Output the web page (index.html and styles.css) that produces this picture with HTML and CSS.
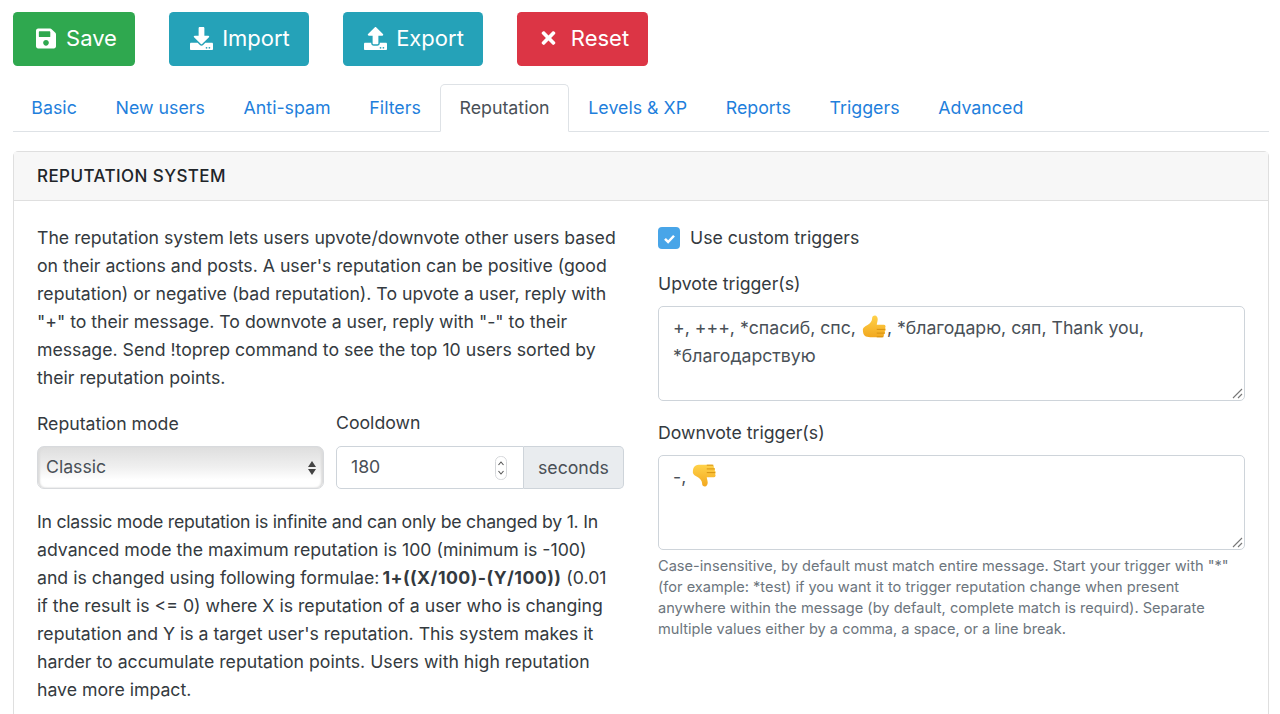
FILE: index.html
```html
<!DOCTYPE html>
<html lang="en">
<head>
<meta charset="utf-8">
<title>Reputation settings</title>
<link rel="stylesheet" href="styles.css">
</head>
<body>
<div class="page">
  <div class="toolbar">
    <button class="btn btn-green"><svg class="ic" viewBox="0 0 448 512"><path d="M433.941 129.941l-83.882-83.882A48 48 0 0 0 316.118 32H48C21.49 32 0 53.49 0 80v352c0 26.51 21.49 48 48 48h352c26.51 0 48-21.49 48-48V163.882a48 48 0 0 0-14.059-33.941zM224 416c-35.346 0-64-28.654-64-64 0-35.346 28.654-64 64-64s64 28.654 64 64c0 35.346-28.654 64-64 64zm96-304.52V212c0 6.627-5.373 12-12 12H76c-6.627 0-12-5.373-12-12V108c0-6.627 5.373-12 12-12h228.52c3.183 0 6.235 1.264 8.485 3.515l3.48 3.48A11.996 11.996 0 0 1 320 111.48z"/></svg><span class="btn-text">Save</span></button>
    <button class="btn btn-teal"><svg class="ic ic-wide" viewBox="0 0 512 512"><path d="M216 0h80c13.3 0 24 10.7 24 24v168h87.7c17.8 0 26.7 21.5 14.1 34.1L269.7 378.3c-7.5 7.5-19.8 7.5-27.3 0L90.1 226.1c-12.6-12.6-3.7-34.1 14.1-34.1H192V24c0-13.3 10.7-24 24-24zm296 376v112c0 13.3-10.7 24-24 24H24c-13.3 0-24-10.7-24-24V376c0-13.3 10.7-24 24-24h146.7l49 49c20.1 20.1 52.5 20.1 72.6 0l49-49H488c13.3 0 24 10.7 24 24zm-124 88c0-11-9-20-20-20s-20 9-20 20 9 20 20 20 20-9 20-20zm64 0c0-11-9-20-20-20s-20 9-20 20 9 20 20 20 20-9 20-20z"/></svg><span class="btn-text">Import</span></button>
    <button class="btn btn-teal"><svg class="ic ic-wide" viewBox="0 0 512 512"><path d="M296 384h-80c-13.3 0-24-10.7-24-24V192h-87.7c-17.8 0-26.7-21.5-14.1-34.1L242.3 5.7c7.5-7.5 19.8-7.5 27.3 0l152.2 152.2c12.6 12.6 3.7 34.1-14.1 34.1H320v168c0 13.3-10.7 24-24 24zm216-8v112c0 13.3-10.7 24-24 24H24c-13.3 0-24-10.7-24-24V376c0-13.3 10.7-24 24-24h136v8c0 30.9 25.1 56 56 56h80c30.9 0 56-25.1 56-56v-8h136c13.3 0 24 10.7 24 24zm-124 88c0-11-9-20-20-20s-20 9-20 20 9 20 20 20 20-9 20-20zm64 0c0-11-9-20-20-20s-20 9-20 20 9 20 20 20 20-9 20-20z"/></svg><span class="btn-text">Export</span></button>
    <button class="btn btn-red"><svg class="ic ic-x" viewBox="0 0 352 512"><path d="M242.72 256l100.07-100.07c12.28-12.28 12.28-32.19 0-44.48l-22.24-22.24c-12.28-12.28-32.19-12.28-44.48 0L176 189.28 75.93 89.21c-12.28-12.28-32.19-12.28-44.48 0L9.21 111.45c-12.28 12.28-12.28 32.19 0 44.48L109.28 256 9.21 356.07c-12.28 12.28-12.28 32.19 0 44.48l22.24 22.24c12.28 12.28 32.2 12.28 44.48 0L176 322.72l100.07 100.07c12.28 12.28 32.2 12.28 44.48 0l22.24-22.24c12.28-12.28 12.28-32.19 0-44.48L242.72 256z"/></svg><span class="btn-text">Reset</span></button>
  </div>
  <nav class="tabs">
    <a class="tab">Basic</a>
    <a class="tab">New users</a>
    <a class="tab">Anti-spam</a>
    <a class="tab">Filters</a>
    <a class="tab active">Reputation</a>
    <a class="tab">Levels &amp; XP</a>
    <a class="tab">Reports</a>
    <a class="tab">Triggers</a>
    <a class="tab">Advanced</a>
  </nav>
  <section class="card">
    <header class="card-head">REPUTATION SYSTEM</header>
    <div class="card-body">
      <div class="col">
        <p class="para">The reputation system lets users upvote/downvote other users based<br>on their actions and posts. A user's reputation can be positive (good<br>reputation) or negative (bad reputation). To upvote a user, reply with<br>"+" to their message. To downvote a user, reply with "-" to their<br>message. Send !toprep command to see the top 10 users sorted by<br>their reputation points.</p>
        <div class="form-row">
          <div class="field field-mode">
            <label class="label">Reputation mode</label>
            <div class="select">Classic
              <svg class="sel-arrows" viewBox="0 0 10 16"><path d="M5 1l4 6H1zM5 15L1 9h8z"/></svg>
            </div>
          </div>
          <div class="field field-cool">
            <label class="label label-cool">Cooldown</label>
            <div class="input-group">
              <div class="number">180
                <svg class="spin" viewBox="0 0 12 24"><rect x=".5" y=".5" width="11" height="23" rx="5" fill="#fff" stroke="#d5d7da"/><path d="M3.5 9L6 6l2.500 3M3.500 15L6 18l2.500-3" fill="none" stroke="#555" stroke-width="1.100"/></svg>
              </div>
              <span class="addon">seconds</span>
            </div>
          </div>
        </div>
        <p class="para para-mode"><span class="tight">In classic mode reputation is infinite and can only be changed by 1. In</span><br>advanced mode the maximum reputation is 100 (minimum is -100)<br>and is changed using following formulae: <b class="formula">1+((X/100)-(Y/100))</b> (0.01<br>if the result is &lt;= 0) where X is reputation of a user who is changing<br>reputation and Y is a target user's reputation. This system makes it<br>harder to accumulate reputation points. Users with high reputation<br>have more impact.</p>
      </div>
      <div class="col">
        <div class="check-row">
          <span class="checkbox"><svg viewBox="0 0 12 12"><path d="M2.400 6.300l2.500 2.500 4.700-5" fill="none" stroke="#fff" stroke-width="2"/></svg></span>
          <span>Use custom triggers</span>
        </div>
        <label class="label label-up">Upvote trigger(s)</label>
        <div class="textarea">+, +++, *спасиб, спс, <svg class="emoji" viewBox="0 0 28 28"><defs><linearGradient id="g1" x1="0" y1="0" x2="0" y2="1"><stop offset="0" stop-color="#ffd24a"/><stop offset="1" stop-color="#f2a81f"/></linearGradient></defs><path d="M2 16c0-2.500 3-4 5.500-5.500 2.500-1.500 4.500-4 4.500-7 0-2 1.200-3 3-3s3 2 3 4c0 2-1 4.500-1 6h7.500c2 0 2.500 2.300 1.400 3.500 1 1.100.8 3-.4 3.600.8 1.200.3 3-1 3.400.5 1.400-.3 3-2 3H10c-5 0-8-1.500-8-8z" fill="url(#g1)"/><path d="M17 15.500h9M17 19.500h8.500M17 23.500h7" stroke="#d4900f" stroke-width="1"/></svg>, *благодарю, сяп, Thank you, *благодарствую<svg class="grip" viewBox="0 0 12 12"><path d="M2 11L11 2M7 11l4-4" stroke="#777" stroke-width="1.100"/></svg></div>
        <label class="label label-down">Downvote trigger(s)</label>
        <div class="textarea">-, <svg class="emoji emoji-down" viewBox="0 0 28 28"><defs><linearGradient id="g2" x1="0" y1="1" x2="0" y2="0"><stop offset="0" stop-color="#ffd24a"/><stop offset="1" stop-color="#f2a81f"/></linearGradient></defs><g transform="matrix(1 0 0 -1 0 28)"><path d="M2 16c0-2.500 3-4 5.500-5.500 2.500-1.500 4.500-4 4.500-7 0-2 1.200-3 3-3s3 2 3 4c0 2-1 4.500-1 6h7.500c2 0 2.500 2.300 1.400 3.500 1 1.100.8 3-.4 3.600.8 1.200.3 3-1 3.400.5 1.400-.3 3-2 3H10c-5 0-8-1.500-8-8z" fill="url(#g2)"/><path d="M17 15.500h9M17 19.500h8.500M17 23.500h7" stroke="#d4900f" stroke-width="1"/></g></svg><svg class="grip" viewBox="0 0 12 12"><path d="M2 11L11 2M7 11l4-4" stroke="#777" stroke-width="1.100"/></svg></div>
        <small class="hint">Case-insensitive, by default must match entire message. Start your trigger with "*" (for example: *test) if you want it to trigger reputation change when present anywhere within the message (by default, complete match is requird). Separate multiple values either by a comma, a space, or a line break.</small>
      </div>
    </div>
  </section>
</div>
</body>
</html>
```
FILE: styles.css
```css
* { box-sizing: border-box; }
html, body { margin: 0; height: 714px; overflow: hidden; background: #fff; }
body { font-family: Inter, "Noto Sans", sans-serif; font-size: 17.68px; line-height: 28px; color: #343a40; }
.page { padding: 12px 11px 0 13px; }
.toolbar { display: flex; gap: 34px; height: 54px; }
.btn { display: flex; align-items: center; justify-content: center; height: 54px; border: 0; border-radius: 4.500px; color: #fff; font: inherit; font-size: 22px; padding: 0 0 2px; }
.btn:nth-child(1) { width: 122px; padding-left: 5px; }
.btn:nth-child(2), .btn:nth-child(3) { width: 140px; padding-left: 2px; }
.btn:nth-child(4) { width: 131px; padding-left: 4px; }
.btn-green { background: #2fa84f; }
.btn-teal { background: #25a2b8; }
.btn-red { background: #dc3545; }
.ic { width: 20px; height: 23px; margin-right: 10px; fill: #fff; }
.ic-wide { width: 23px; margin-right: 9px; }
.ic-x { width: 17px; height: 20px; margin-right: 14px; }
.tabs { display: flex; height: 48px; margin-top: 18px; border-bottom: 1px solid #dee2e6; }
.tab { height: 48px; padding: 9px 18.350px 0; border: 1px solid transparent; border-radius: 5px 5px 0 0; color: #1f7fdc; font-size: 17.8px; white-space: nowrap; }
.tab:first-child { margin-left: -1px; }
.tab.active { color: #495057; background: #fff; border-color: #dee2e6 #dee2e6 #fff; }
.card { margin-top: 19px; width: 1256px; height: 700px; border: 1px solid #dfdfdf; border-radius: 5px; }
.card-head { height: 49px; padding: 10px 23px; background: #f7f7f7; border-bottom: 1px solid #dfdfdf; font-size: 17px; font-weight: 500; color: #212529; letter-spacing: .42px; }
.card-body { display: grid; grid-template-columns: 587px 587px; column-gap: 34px; padding: 23px 23px 0; }
.para { margin: 0; white-space: nowrap; }
.tight { letter-spacing: -.24px; }
.formula { letter-spacing: .45px; margin-left: -2px; }
.form-row { display: flex; gap: 12px; margin-top: 18px; }
.field-mode { width: 287px; }
.field-cool { width: 288px; }
.label { display: block; }
.label-cool { margin-top: -1px; margin-bottom: 9px; }
.field-mode .label { margin-bottom: 8px; }
.select { position: relative; height: 43px; padding: 0 8px 1px; display: flex; align-items: center; border: 1px solid #d8dadd; border-radius: 7px; background: linear-gradient(#dedede, #f0f0f0 50%, #fff 80%); box-shadow: inset 2px 0 2px #dcdcdc, inset -2px 0 2px #dcdcdc; color: #495057; }
.sel-arrows { position: absolute; right: 6px; top: 11px; width: 10px; height: 20px; fill: #444; }
.input-group { display: flex; height: 43px; }
.number { position: relative; width: 188px; padding: 0 14px 1px; display: flex; align-items: center; border: 1px solid #ced4da; border-radius: 5px 0 0 5px; color: #495057; }
.spin { position: absolute; right: 16px; top: 9px; width: 12px; height: 24px; }
.addon { width: 100px; display: flex; align-items: center; justify-content: center; background: #e9ecef; border: 1px solid #ced4da; border-left: 0; border-radius: 0 5px 5px 0; color: #495057; }
.para-mode { margin-top: 19px; }
.check-row { display: flex; align-items: center; gap: 10px; height: 28px; }
.checkbox { display: flex; width: 22px; height: 22px; border-radius: 4px; background: #48a5e8; align-items: center; justify-content: center; }
.checkbox svg { width: 15px; height: 15px; }
.label-up { margin-top: 18px; margin-bottom: 8px; }
.label-down { margin-top: 18px; margin-bottom: 8px; }
.textarea { position: relative; height: 95px; padding: 7px 14px; border: 1px solid #ced4da; border-radius: 5px; color: #495057; line-height: 28px; }
.emoji { width: 26px; height: 26px; margin: -6px 0 -6px; vertical-align: -1px; }
.emoji-down { vertical-align: 2px; }
.grip { position: absolute; right: 1px; bottom: 1px; width: 12px; height: 12px; }
.hint { display: block; margin-top: 6px; font-size: 14.6px; line-height: 21px; color: #6c757d; }
```
